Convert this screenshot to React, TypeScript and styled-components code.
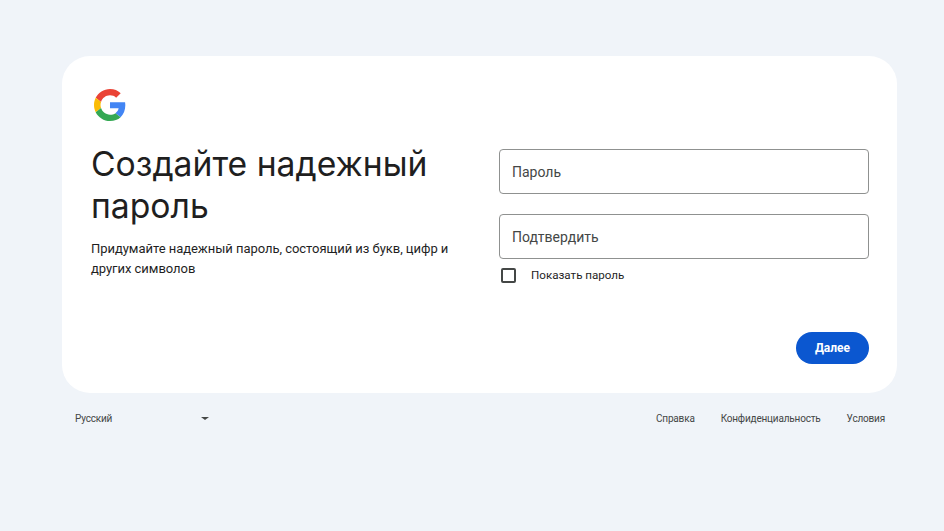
import React from "react";
import styled, { createGlobalStyle } from "styled-components";

const Global = createGlobalStyle`
  html, body { margin: 0; padding: 0; background: #f0f4f9; }
  body { font-family: Roboto, "Liberation Sans", sans-serif; color: #1f1f1f; }
`;

const Page = styled.div`
  width: 944px;
  height: 531px;
  padding: 56px 47px 0 62px;
  box-sizing: border-box;
  overflow: hidden;
`;

const Card = styled.main`
  width: 835px;
  height: 337px;
  box-sizing: border-box;
  background: #fff;
  border-radius: 28px;
  padding: 30px 28px 29px 29px;
  display: grid;
  grid-template-columns: 408px 370px;
`;

const Intro = styled.section`
  display: flex;
  flex-direction: column;
  align-items: flex-start;
`;

const Logo = styled.svg`
  width: 32px;
  height: 32px;
  margin: 3px 0 0 3px;
  display: block;
`;

const Title = styled.h1`
  margin: 22px 0 0;
  font-family: Inter, "Noto Sans", sans-serif;
  font-weight: 400;
  font-size: 33.7px;
  line-height: 42px;
  color: #1f1f1f;
  width: 360px;
`;

const Lead = styled.p`
  margin: 12px 0 0;
  font-family: Roboto, sans-serif;
  font-size: 13px;
  letter-spacing: -0.04px;
  line-height: 20px;
  color: #1f1f1f;
  width: 362px;
`;

const FormColumn = styled.section`
  display: flex;
  flex-direction: column;
  padding-top: 63px;
`;

const Field = styled.label<{ $gap?: number }>`
  display: flex;
  align-items: center;
  width: 369.5px;
  height: 45px;
  box-sizing: border-box;
  border: 1px solid #8f9190;
  border-radius: 4px;
  padding: 0 12px;
  margin-top: ${(p) => p.$gap ?? 0}px;
  font-size: 14px;
  color: #444746;
`;

const CheckRow = styled.label`
  display: flex;
  align-items: center;
  margin-top: 8px;
  height: 16px;
  font-size: 11.6px;
  font-weight: 400;
  color: #1f1f1f;
`;

const Box = styled.span`
  width: 15px;
  height: 15px;
  box-sizing: border-box;
  border: 2px solid #444746;
  border-radius: 2px;
  margin: 0 15px 0 2px;
`;

const Actions = styled.div`
  display: flex;
  justify-content: flex-end;
  margin-top: 49px;
`;

const NextButton = styled.button`
  width: 73px;
  height: 32px;
  border: 0;
  border-radius: 16px;
  background: #0b57d0;
  color: #fff;
  font-family: Roboto, sans-serif;
  font-size: 12px;
  font-weight: 700;
`;

const Footer = styled.footer`
  display: flex;
  justify-content: space-between;
  align-items: center;
  height: 16px;
  margin-top: 17px;
  padding: 0 12px 0 13px;
  font-size: 10px;
  letter-spacing: -0.18px;
  color: #444746;
`;

const LangSelect = styled.div`
  width: 134px;
  display: flex;
  justify-content: space-between;
  align-items: center;
`;

const Caret = styled.span`
  width: 0;
  height: 0;
  border-left: 4px solid transparent;
  border-right: 4px solid transparent;
  border-top: 3.5px solid #444746;
`;

const Links = styled.nav`
  display: flex;
  gap: 26px;
`;

export default function App() {
  return (
    <Page>
      <Global />
      <Card>
        <Intro>
          <Logo viewBox="0 0 48 48">
            <path fill="#EA4335" d="M24 9.5c3.54 0 6.71 1.22 9.21 3.6l6.85-6.85C35.9 2.38 30.47 0 24 0 14.62 0 6.51 5.38 2.56 13.22l7.98 6.19C12.43 13.72 17.74 9.5 24 9.5z" />
            <path fill="#4285F4" d="M46.98 24.55c0-1.57-.15-3.09-.38-4.55H24v9.02h12.94c-.58 2.96-2.26 5.48-4.78 7.18l7.73 6c4.51-4.18 7.09-10.36 7.09-17.65z" />
            <path fill="#FBBC05" d="M10.53 28.59c-.48-1.45-.76-2.99-.76-4.59s.27-3.14.76-4.59l-7.98-6.19C.92 16.46 0 20.12 0 24c0 3.88.92 7.54 2.56 10.78l7.97-6.19z" />
            <path fill="#34A853" d="M24 48c6.48 0 11.93-2.13 15.89-5.81l-7.73-6c-2.15 1.45-4.92 2.3-8.16 2.3-6.26 0-11.57-4.22-13.47-9.91l-7.98 6.19C6.51 42.62 14.62 48 24 48z" />
          </Logo>
          <Title>Создайте надежный пароль</Title>
          <Lead>Придумайте надежный пароль, состоящий из букв, цифр и других символов</Lead>
        </Intro>
        <FormColumn>
          <Field>Пароль</Field>
          <Field $gap={20}>Подтвердить</Field>
          <CheckRow>
            <Box />
            Показать пароль
          </CheckRow>
          <Actions>
            <NextButton>Далее</NextButton>
          </Actions>
        </FormColumn>
      </Card>
      <Footer>
        <LangSelect>
          Русский
          <Caret />
        </LangSelect>
        <Links>
          <span>Справка</span>
          <span>Конфиденциальность</span>
          <span>Условия</span>
        </Links>
      </Footer>
    </Page>
  );
}
